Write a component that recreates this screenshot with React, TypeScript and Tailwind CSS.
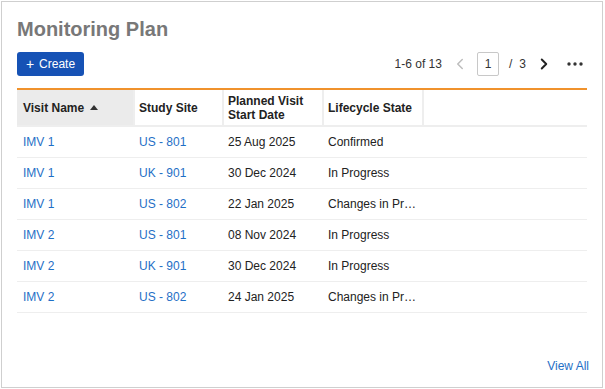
import React from 'react'
import { ChevronLeft, ChevronRight } from 'lucide-react'

interface Visit {
  name: string
  site: string
  date: string
  state: string
}

const visits: Visit[] = [
  { name: 'IMV 1', site: 'US - 801', date: '25 Aug 2025', state: 'Confirmed' },
  { name: 'IMV 1', site: 'UK - 901', date: '30 Dec 2024', state: 'In Progress' },
  { name: 'IMV 1', site: 'US - 802', date: '22 Jan 2025', state: 'Changes in Progress' },
  { name: 'IMV 2', site: 'US - 801', date: '08 Nov 2024', state: 'In Progress' },
  { name: 'IMV 2', site: 'UK - 901', date: '30 Dec 2024', state: 'In Progress' },
  { name: 'IMV 2', site: 'US - 802', date: '24 Jan 2025', state: 'Changes in Progress' },
]

const cols = 'grid grid-cols-[116px_89px_100px_100px_1fr]'

export default function App() {
  return (
    <div className="w-[605px] h-[389px] pl-px pt-px bg-white font-['Liberation_Sans',Arial,sans-serif] text-[12px] text-[#222]">
      <div className="w-[602px] h-[387px] border border-[#cfcfcf] flex flex-col px-[15px] pt-[15px] pb-[12px]">
        {/* Title */}
        <h1 className="text-[20px] leading-[24px] font-bold text-[#787878]">Monitoring Plan</h1>

        {/* Toolbar */}
        <div className="mt-[11px] flex items-center h-[24px]">
          <button className="h-[24px] w-[67px] rounded-[3px] bg-[#1652b5] text-white text-[12px] flex items-center justify-center gap-[5px]">
            <span className="text-[14px] leading-none -mt-px">+</span>
            <span>Create</span>
          </button>
          <div className="ml-auto flex items-center">
            <span className="text-[#333]">1-6 of 13</span>
            <ChevronLeft className="ml-[9px] text-[#bdbdbd]" size={18} strokeWidth={2} />
            <div className="ml-[8px] w-[22px] h-[24px] border border-[#c8c8c8] rounded-[2px] flex items-center justify-center text-[#333]">
              1
            </div>
            <span className="ml-[10px] text-[#333]">/</span>
            <span className="ml-[7px] text-[#333]">3</span>
            <ChevronRight className="ml-[9px] text-[#222]" size={18} strokeWidth={2.6} />
            <svg className="ml-[14px] mr-[4px]" width="16" height="4" viewBox="0 0 16 4">
              <circle cx="2" cy="2" r="1.7" fill="#333" />
              <circle cx="8" cy="2" r="1.7" fill="#333" />
              <circle cx="14" cy="2" r="1.7" fill="#333" />
            </svg>
          </div>
        </div>

        {/* Table */}
        <div className="mt-[12px] border-t-2 border-[#f0922c]">
          <div className={`${cols} h-[37px] border-b-2 border-[#eeeeee] font-bold text-[#222] leading-[14px]`}>
            <div className="bg-[#ebebeb] flex items-center pl-[6px] gap-[6px]">
              Visit Name
              <svg width="8" height="5" viewBox="0 0 8 5">
                <path d="M0 5 L4 0 L8 5 Z" fill="#333" />
              </svg>
            </div>
            <div className="border-l-2 border-[#eeeeee] flex items-center pl-[4px]">Study Site</div>
            <div className="border-l-2 border-[#eeeeee] flex items-center pl-[4px]">
              Planned Visit
              <br />
              Start Date
            </div>
            <div className="border-l-2 border-[#eeeeee] flex items-center pl-[4px]">Lifecycle State</div>
            <div className="border-l-2 border-[#eeeeee]" />
          </div>

          {visits.map((v, i) => (
            <div key={i} className={`${cols} h-[31px] border-b border-[#eeeeee] items-center`}>
              <div className="pl-[6px] text-[#1f6fc6]">{v.name}</div>
              <div className="pl-[6px] text-[#1f6fc6]">{v.site}</div>
              <div className="pl-[6px]">{v.date}</div>
              <div className="pl-[6px] pr-[2px] truncate">{v.state}</div>
              <div />
            </div>
          ))}
        </div>

        <div className="mt-auto flex justify-end -mr-[2px]">
          <span className="text-[#1f6fc6]">View All</span>
        </div>
      </div>
    </div>
  )
}
